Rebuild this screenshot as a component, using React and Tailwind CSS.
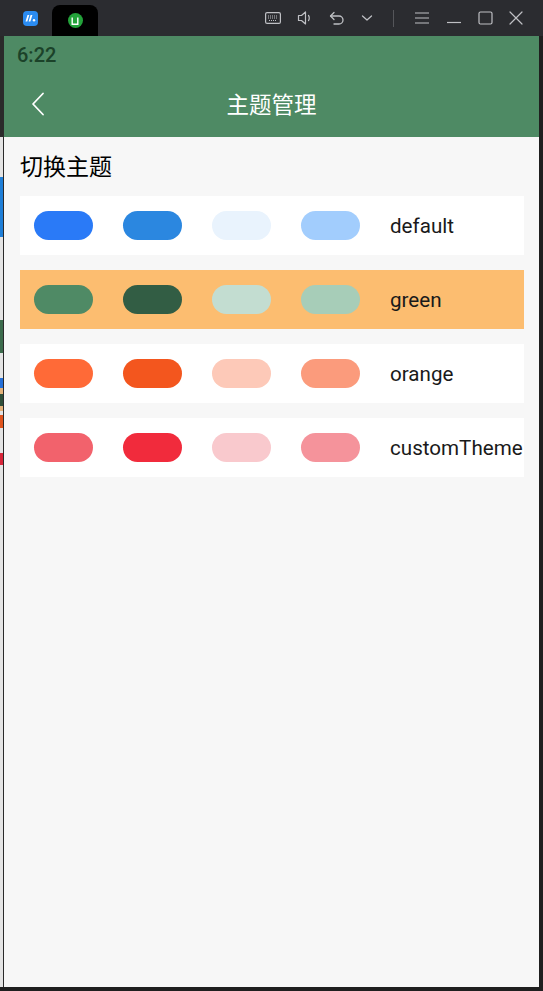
import React, { useState } from "react";

const themes = [
  { name: "default", colors: ["#2a7af7", "#2b87e0", "#e9f3fd", "#a2cdfd"] },
  { name: "green", colors: ["#4f8a65", "#325d44", "#c3ddd1", "#a7cdb8"] },
  { name: "orange", colors: ["#ff6a37", "#f3561e", "#fdc9b8", "#fb9b7c"] },
  { name: "customTheme", colors: ["#f2626c", "#f12b3c", "#f9c9cd", "#f5939b"] },
];

function TitleBarIcons() {
  const c = "#bfc0c4";
  return (
    <div className="flex items-center ml-auto mr-[20px] gap-[16px]">
      <svg width="16" height="12" viewBox="0 0 16 12" fill="none" stroke={c} strokeWidth="1.2">
        <rect x="0.6" y="0.6" width="14.8" height="10.8" rx="1.5" />
        <path d="M3 4h10M3 6h10M4 8.5h8" strokeDasharray="1 1" />
      </svg>
      <svg width="16" height="16" viewBox="0 0 16 16" fill="none" stroke={c} strokeWidth="1.2">
        <path d="M1.5 5.5h3l4-3.5v12l-4-3.5h-3z" strokeLinejoin="round" />
        <path d="M11.5 5.5c1 1.2 1 3.8 0 5" strokeLinecap="round" />
      </svg>
      <svg width="16" height="14" viewBox="0 0 16 14" fill="none" stroke={c} strokeWidth="1.3">
        <path d="M5 1.5L1.5 5 5 8.5" strokeLinecap="round" strokeLinejoin="round" />
        <path d="M1.8 5h8.2a4 4 0 0 1 0 8H5" strokeLinecap="round" />
      </svg>
      <svg width="12" height="8" viewBox="0 0 12 8" fill="none" stroke={c} strokeWidth="1.3">
        <path d="M1.5 2l4.5 4 4.5-4" strokeLinecap="round" strokeLinejoin="round" />
      </svg>
      <div className="w-px h-[17px] bg-[#55565a] mx-[4px]" />
      <svg width="16" height="14" viewBox="0 0 16 14" fill="none" stroke={c} strokeWidth="1.2">
        <path d="M1 2h14M1 7h14M1 12h14" />
      </svg>
      <svg width="16" height="14" viewBox="0 0 16 14" fill="none" stroke={c} strokeWidth="1.2">
        <path d="M1 11.5h14" />
      </svg>
      <svg width="15" height="14" viewBox="0 0 15 14" fill="none" stroke={c} strokeWidth="1.2">
        <rect x="1" y="1" width="13" height="12" rx="1.5" />
      </svg>
      <svg width="14" height="14" viewBox="0 0 14 14" fill="none" stroke={c} strokeWidth="1.2">
        <path d="M1 1l12 12M13 1L1 13" strokeLinecap="round" />
      </svg>
    </div>
  );
}

function TitleBar() {
  return (
    <div className="h-[36px] bg-[#2b2c30] flex items-end shrink-0">
      <div className="flex items-center h-[36px] pl-[23px]">
        <div className="w-[15px] h-[15px] rounded-[4px] bg-[#2b8cf2] flex items-center justify-center">
          <svg width="11" height="8" viewBox="0 0 11 8" fill="#fff">
            <path d="M0.5 7.5L2.5 1h1.8l-2 6.5zM3.6 7.5L5.6 1h1.8l-2 6.5z" />
            <circle cx="9" cy="6.3" r="1.2" />
          </svg>
        </div>
      </div>
      <div className="ml-[14px] w-[46px] h-[31px] bg-black rounded-t-[8px] flex items-center justify-center">
        <div className="w-[15px] h-[15px] rounded-full bg-[#23a23a] flex items-center justify-center">
          <svg width="8" height="8" viewBox="0 0 8 8" fill="none" stroke="#fff" strokeWidth="1.4">
            <path d="M1.2 0.5v6.7h5.6V0.5" />
          </svg>
        </div>
      </div>
      <div className="self-center flex-1 flex">
        <TitleBarIcons />
      </div>
    </div>
  );
}

function LeftStrip() {
  return (
    <div className="w-[4px] shrink-0 flex">
      <div className="w-[3px] flex flex-col bg-[#2a2a2a]">
        <div className="h-[101px]" />
        <div className="h-[40px] bg-[#e4e4e4]" />
        <div className="h-[60px] bg-[#1f7fd8]" />
        <div className="h-[83px] bg-[#e4e4e4]" />
        <div className="h-[33px] bg-[#3c6b4c]" />
        <div className="h-[25px] bg-[#e4e4e4]" />
        <div className="h-[10px] bg-[#2570d8]" />
        <div className="h-[6px] bg-[#e4b27a]" />
        <div className="h-[12px] bg-[#2f4f3a]" />
        <div className="h-[5px] bg-[#e4b27a]" />
        <div className="h-[4px] bg-[#e4e4e4]" />
        <div className="h-[13px] bg-[#e0541e]" />
        <div className="h-[25px] bg-[#e4e4e4]" />
        <div className="h-[12px] bg-[#d8263a]" />
        <div className="flex-1 bg-[#e4e4e4]" />
      </div>
      <div className="w-px bg-[#2a2a2a]" />
    </div>
  );
}

function ThemeRow({ theme, active, onSelect }) {
  return (
    <div
      onClick={onSelect}
      className={`h-[59px] flex items-center pl-[14px] gap-[30px] cursor-pointer overflow-hidden ${
        active ? "bg-[#fcbd70]" : "bg-white"
      }`}
    >
      {theme.colors.map((color, i) => (
        <div
          key={i}
          className="w-[59px] h-[29px] rounded-full shrink-0"
          style={{ backgroundColor: color }}
        />
      ))}
      <span className="text-[20.6px] text-[#1a1a1a] whitespace-nowrap font-['Roboto',sans-serif] mt-[2px]">
        {theme.name}
      </span>
    </div>
  );
}

export default function App() {
  const [current, setCurrent] = useState("green");

  return (
    <div className="w-[543px] h-[991px] bg-[#1f1f1f] flex flex-col overflow-hidden font-['Roboto','Noto_Sans_CJK_SC',sans-serif]">
      <TitleBar />
      <div className="flex flex-1 min-h-0">
        <LeftStrip />
        <div className="flex-1 flex flex-col bg-[#f7f7f7]">
          <div className="h-[101px] bg-[#4e8a64] flex flex-col shrink-0">
            <div className="h-[38px] flex items-center pl-[13px]">
              <span className="text-[20px] font-medium text-[#1b4229] leading-none">6:22</span>
            </div>
            <div className="flex-1 relative flex items-center justify-center">
              <div className="absolute left-[27px] top-[18px]">
                <svg width="14" height="24" viewBox="0 0 14 24" fill="none" stroke="#fff" strokeWidth="1.8">
                  <path d="M12 1.5L2 12l10 10.5" strokeLinecap="round" strokeLinejoin="round" />
                </svg>
              </div>
              <span className="text-[22.5px] text-white font-['Noto_Sans_CJK_SC',sans-serif] mb-[4px]">
                主题管理
              </span>
            </div>
          </div>
          <div className="px-[16px] pr-[15px]">
            <div className="pt-[13px] pb-[15px] text-[23px] text-black leading-[31px] font-['Noto_Sans_CJK_SC',sans-serif]">
              切换主题
            </div>
            <div className="flex flex-col gap-[15px]">
              {themes.map((t) => (
                <ThemeRow
                  key={t.name}
                  theme={t}
                  active={current === t.name}
                  onSelect={() => setCurrent(t.name)}
                />
              ))}
            </div>
          </div>
        </div>
        <div className="w-[4px] bg-[#1f1f1f] shrink-0" />
      </div>
      <div className="h-[4px] bg-[#1f1f1f] shrink-0" />
    </div>
  );
}
